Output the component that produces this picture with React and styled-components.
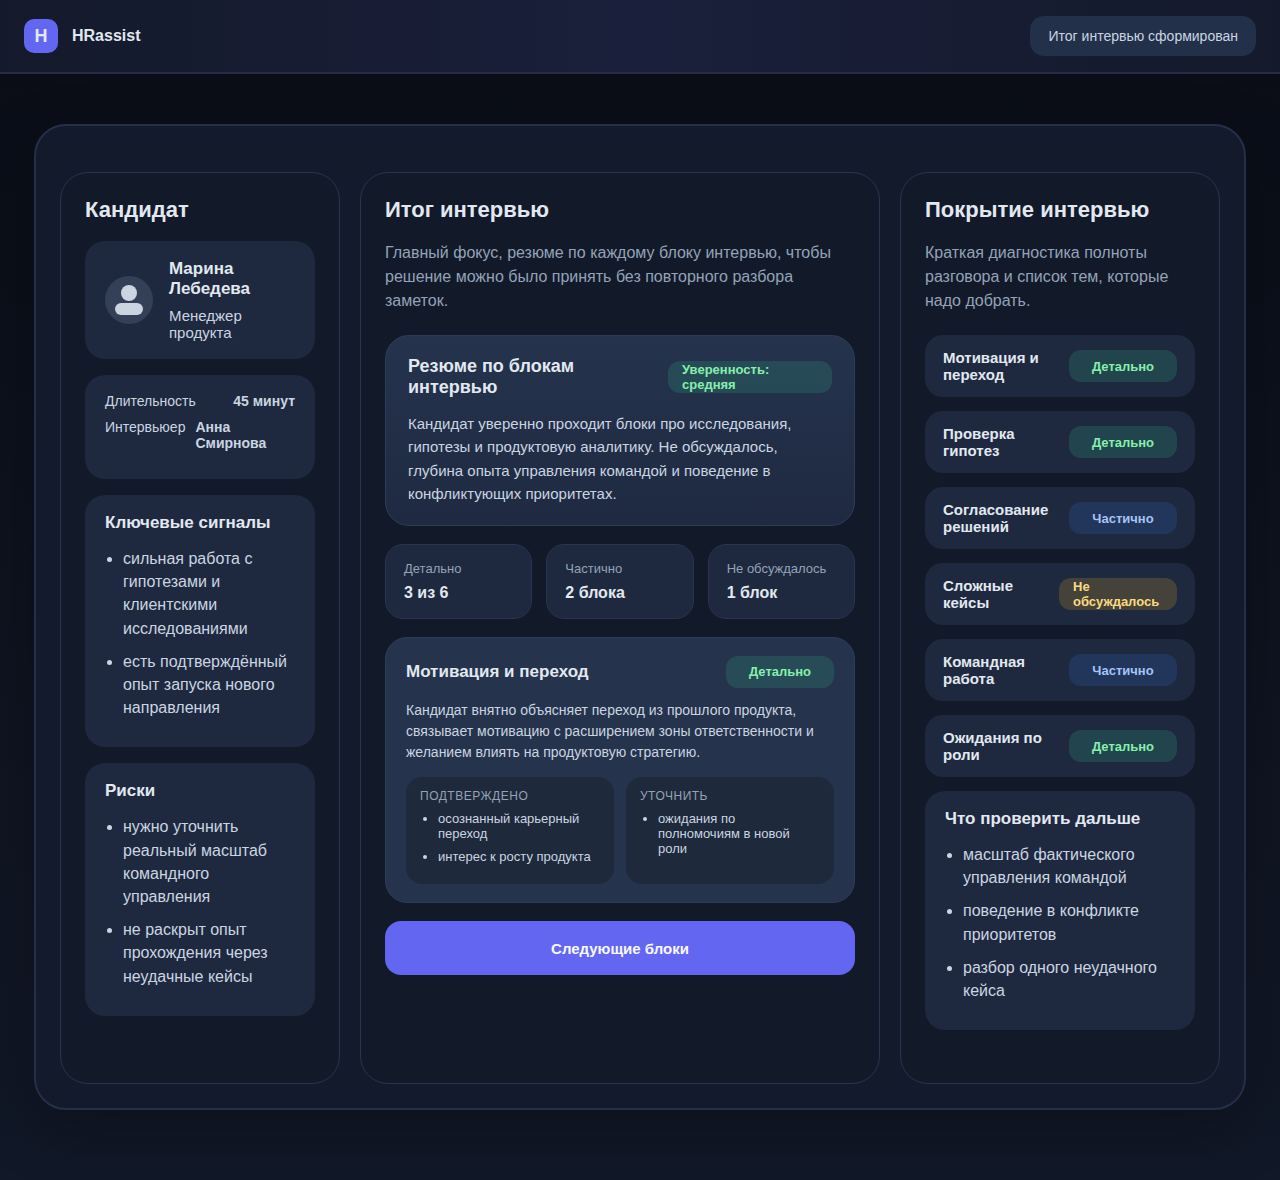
import React from 'react';
import styled, { createGlobalStyle } from 'styled-components';

const GlobalStyle = createGlobalStyle`
  * { box-sizing: border-box; }
  html, body { margin: 0; padding: 0; }
  body {
    min-height: 100vh;
    background: linear-gradient(180deg, #0a0d16 0%, #111827 100%);
    color: #e2e8f0;
    font-family: "Liberation Sans", Arial, sans-serif;
  }
`;

const TONES = {
  good: { bg: 'rgba(52, 211, 153, 0.16)', fg: '#86efac' },
  partial: { bg: 'rgba(59, 130, 246, 0.15)', fg: '#a5c4f5' },
  missing: { bg: 'rgba(251, 191, 36, 0.18)', fg: '#fcd980' },
};

const Header = styled.header`
  height: 74px;
  padding: 0 24px;
  display: flex;
  align-items: center;
  justify-content: space-between;
  background: linear-gradient(90deg, #141a2b 0%, #1a1f3b 50%, #141a2b 100%);
  border-bottom: 2px solid #262b47;
`;

const Brand = styled.div`
  display: flex;
  align-items: center;
  gap: 14px;
  font-size: 16px;
  font-weight: 700;
  color: #e2e8f0;
`;

const Logo = styled.div`
  width: 34px;
  height: 34px;
  border-radius: 10px;
  background: #6366f1;
  display: flex;
  align-items: center;
  justify-content: center;
  font-size: 18px;
  font-weight: 700;
`;

const StatusPill = styled.div`
  height: 40px;
  padding: 0 18px;
  display: flex;
  align-items: center;
  border-radius: 14px;
  background: #22304a;
  font-size: 14px;
  color: #cbd5e1;
`;

const Main = styled.main`
  padding: 50px 34px 70px;
`;

const Shell = styled.div`
  padding: 46px 24px 24px;
  display: grid;
  grid-template-columns: 280px 520px 320px;
  gap: 20px;
  background: #131a2b;
  border: 2px solid #262f4a;
  border-radius: 32px;
  box-shadow: 0 20px 60px rgba(0, 0, 0, 0.25);
`;

const Column = styled.section`
  min-height: 912px;
  padding: 24px;
  display: flex;
  flex-direction: column;
  gap: ${(p) => p.$gap || 16}px;
  background: #121929;
  border: 1px solid #2a3450;
  border-radius: 28px;
`;

const ColumnTitle = styled.h2`
  margin: 0 0 3px;
  font-size: 22px;
  line-height: 25px;
  font-weight: 700;
  color: #e2e8f0;
`;

const Intro = styled.p`
  margin: 19px 0 ${(p) => p.$after}px;
  font-size: 16px;
  line-height: 24px;
  color: #94a3b8;
`;

const Card = styled.div`
  padding: 18px 20px;
  background: #1e293f;
  border-radius: 20px;
`;

const ProfileCard = styled(Card)`
  display: flex;
  align-items: center;
  gap: 16px;
`;

const Avatar = styled.div`
  flex: none;
  width: 48px;
  height: 48px;
  border-radius: 50%;
  background: #334058;
  display: flex;
  align-items: center;
  justify-content: center;
`;

const ProfileName = styled.div`
  font-size: 17px;
  line-height: 20px;
  font-weight: 700;
  color: #e2e8f0;
`;

const ProfileRole = styled.div`
  margin-top: 8px;
  font-size: 15px;
  line-height: 17px;
  color: #cbd5e1;
`;

const MetaCard = styled(Card)`
  height: 104px;
`;

const MetaRow = styled.div`
  display: flex;
  justify-content: space-between;
  gap: 10px;
  margin-bottom: 10px;
  font-size: 14px;
  line-height: 16px;
  color: #cbd5e1;
  strong { font-weight: 700; color: #cbd5e1; }
`;

const CardTitle = styled.h3`
  margin: 0 0 14px;
  font-size: 17px;
  line-height: 20px;
  font-weight: 700;
  color: #e2e8f0;
`;

const BulletList = styled.ul`
  margin: 0;
  padding: 0 0 0 18px;
  font-size: 16px;
  line-height: 23.2px;
  color: #cbd5e1;
  li { margin-bottom: 10px; }
`;

const SummaryCard = styled.div`
  padding: 20px 22px 19px;
  background: linear-gradient(180deg, #25334c 0%, #1f2a42 100%);
  border: 1px solid #2f3c58;
  border-radius: 24px;
`;

const SummaryHead = styled.div`
  display: flex;
  align-items: center;
  justify-content: space-between;
  gap: 12px;
  margin-bottom: 14px;
`;

const SummaryTitle = styled.h3`
  margin: 0;
  flex: 1 1 0;
  font-size: 18px;
  line-height: 21px;
  font-weight: 700;
  color: #e2e8f0;
`;

const SummaryText = styled.p`
  margin: 0;
  font-size: 15px;
  line-height: 23.4px;
  color: #cbd5e1;
`;

const Badge = styled.span`
  flex: ${(p) => (p.$wide ? '0 0 164px' : '0 1 auto')};
  min-width: 108px;
  height: 32px;
  padding: 0 14px;
  display: inline-flex;
  align-items: center;
  justify-content: center;
  border-radius: 12px;
  background: ${(p) => TONES[p.$tone].bg};
  color: ${(p) => TONES[p.$tone].fg};
  font-size: 13px;
  line-height: 15px;
  font-weight: 700;
`;

const StatGrid = styled.div`
  display: grid;
  grid-template-columns: repeat(3, 1fr);
  gap: 14px;
`;

const Stat = styled.div`
  height: 75px;
  padding: 16px 18px;
  background: #1e293f;
  border: 1px solid #2a3450;
  border-radius: 18px;
`;

const StatLabel = styled.div`
  font-size: 13px;
  line-height: 16px;
  color: #94a3b8;
`;

const StatValue = styled.div`
  margin-top: 7px;
  font-size: 16px;
  line-height: 18px;
  font-weight: 700;
  color: #e2e8f0;
`;

const BlockCard = styled.div`
  padding: 18px 20px;
  background: #25334c;
  border: 1px solid #2f3c58;
  border-radius: 22px;
`;

const BlockHead = styled.div`
  display: flex;
  align-items: center;
  justify-content: space-between;
  margin-bottom: 12px;
`;

const BlockTitle = styled.h3`
  margin: 0;
  font-size: 17px;
  line-height: 30px;
  font-weight: 700;
  color: #e2e8f0;
`;

const BlockText = styled.p`
  margin: 0 0 14px;
  font-size: 14px;
  line-height: 21px;
  color: #cbd5e1;
`;

const NotesGrid = styled.div`
  display: grid;
  grid-template-columns: 1fr 1fr;
  gap: 12px;
`;

const Note = styled.div`
  height: 107px;
  padding: 12px 14px;
  background: #1e293b;
  border-radius: 16px;
`;

const NoteTitle = styled.div`
  margin-bottom: 7px;
  font-size: 12px;
  line-height: 15px;
  letter-spacing: 0.5px;
  text-transform: uppercase;
  color: #94a3b8;
`;

const NoteList = styled.ul`
  margin: 0;
  padding: 0 0 0 18px;
  font-size: 13px;
  line-height: 15px;
  color: #cbd5e1;
  li { margin-bottom: 8px; }
`;

const NextButton = styled.button`
  height: 54px;
  padding: 1px 0 0;
  border: 0;
  border-radius: 16px;
  background: #6366f1;
  color: #f8fafc;
  font-family: inherit;
  font-size: 15px;
  font-weight: 700;
  cursor: pointer;
`;

const CoverageRow = styled.div`
  height: 62px;
  padding: 0 18px;
  display: flex;
  align-items: center;
  justify-content: space-between;
  gap: 12px;
  background: #1e293f;
  border-radius: 18px;
`;

const CoverageName = styled.div`
  flex: 1 0 104px;
  font-size: 15px;
  line-height: 17px;
  font-weight: 700;
  color: #e2e8f0;
`;

const coverage = [
  ['Мотивация и переход', 'good', 'Детально'],
  ['Проверка гипотез', 'good', 'Детально'],
  ['Согласование решений', 'partial', 'Частично'],
  ['Сложные кейсы', 'missing', 'Не обсуждалось'],
  ['Командная работа', 'partial', 'Частично'],
  ['Ожидания по роли', 'good', 'Детально'],
];

const stats = [
  ['Детально', '3 из 6'],
  ['Частично', '2 блока'],
  ['Не обсуждалось', '1 блок'],
];

const UserIcon = () => (
  <svg width="28" height="30" viewBox="0 0 28 30" fill="#cbd5e1">
    <circle cx="14" cy="8" r="8" />
    <rect x="0" y="18" width="28" height="12" rx="6" />
  </svg>
);

export default function App() {
  return (
    <>
      <GlobalStyle />
      <Header>
        <Brand>
          <Logo>H</Logo>
          HRassist
        </Brand>
        <StatusPill>Итог интервью сформирован</StatusPill>
      </Header>
      <Main>
        <Shell>
          <Column>
            <ColumnTitle>Кандидат</ColumnTitle>
            <ProfileCard>
              <Avatar><UserIcon /></Avatar>
              <div>
                <ProfileName>Марина Лебедева</ProfileName>
                <ProfileRole>Менеджер продукта</ProfileRole>
              </div>
            </ProfileCard>
            <MetaCard>
              <MetaRow><span>Длительность</span><strong>45 минут</strong></MetaRow>
              <MetaRow><span>Интервьюер</span><strong>Анна Смирнова</strong></MetaRow>
            </MetaCard>
            <Card>
              <CardTitle>Ключевые сигналы</CardTitle>
              <BulletList>
                <li>сильная работа с гипотезами и клиентскими исследованиями</li>
                <li>есть подтверждённый опыт запуска нового направления</li>
              </BulletList>
            </Card>
            <Card>
              <CardTitle>Риски</CardTitle>
              <BulletList>
                <li>нужно уточнить реальный масштаб командного управления</li>
                <li>не раскрыт опыт прохождения через неудачные кейсы</li>
              </BulletList>
            </Card>
          </Column>

          <Column $gap={18}>
            <div>
              <ColumnTitle>Итог интервью</ColumnTitle>
              <Intro $after={4}>Главный фокус, резюме по каждому блоку интервью, чтобы решение можно было принять без повторного разбора заметок.</Intro>
            </div>
            <SummaryCard>
              <SummaryHead>
                <SummaryTitle>Резюме по блокам интервью</SummaryTitle>
                <Badge $tone="good" $wide>Уверенность: средняя</Badge>
              </SummaryHead>
              <SummaryText>Кандидат уверенно проходит блоки про исследования, гипотезы и продуктовую аналитику. Не обсуждалось, глубина опыта управления командой и поведение в конфликтующих приоритетах.</SummaryText>
            </SummaryCard>
            <StatGrid>
              {stats.map(([label, value]) => (
                <Stat key={label}>
                  <StatLabel>{label}</StatLabel>
                  <StatValue>{value}</StatValue>
                </Stat>
              ))}
            </StatGrid>
            <BlockCard>
              <BlockHead>
                <BlockTitle>Мотивация и переход</BlockTitle>
                <Badge $tone="good">Детально</Badge>
              </BlockHead>
              <BlockText>Кандидат внятно объясняет переход из прошлого продукта, связывает мотивацию с расширением зоны ответственности и желанием влиять на продуктовую стратегию.</BlockText>
              <NotesGrid>
                <Note>
                  <NoteTitle>Подтверждено</NoteTitle>
                  <NoteList>
                    <li>осознанный карьерный переход</li>
                    <li>интерес к росту продукта</li>
                  </NoteList>
                </Note>
                <Note>
                  <NoteTitle>Уточнить</NoteTitle>
                  <NoteList>
                    <li>ожидания по полномочиям в новой роли</li>
                  </NoteList>
                </Note>
              </NotesGrid>
            </BlockCard>
            <NextButton>Следующие блоки</NextButton>
          </Column>

          <Column $gap={14}>
            <div>
              <ColumnTitle>Покрытие интервью</ColumnTitle>
              <Intro $after={8}>Краткая диагностика полноты разговора и список тем, которые надо добрать.</Intro>
            </div>
            {coverage.map(([name, tone, label]) => (
              <CoverageRow key={name}>
                <CoverageName>{name}</CoverageName>
                <Badge $tone={tone}>{label}</Badge>
              </CoverageRow>
            ))}
            <Card>
              <CardTitle>Что проверить дальше</CardTitle>
              <BulletList>
                <li>масштаб фактического управления командой</li>
                <li>поведение в конфликте приоритетов</li>
                <li>разбор одного неудачного кейса</li>
              </BulletList>
            </Card>
          </Column>
        </Shell>
      </Main>
    </>
  );
}
